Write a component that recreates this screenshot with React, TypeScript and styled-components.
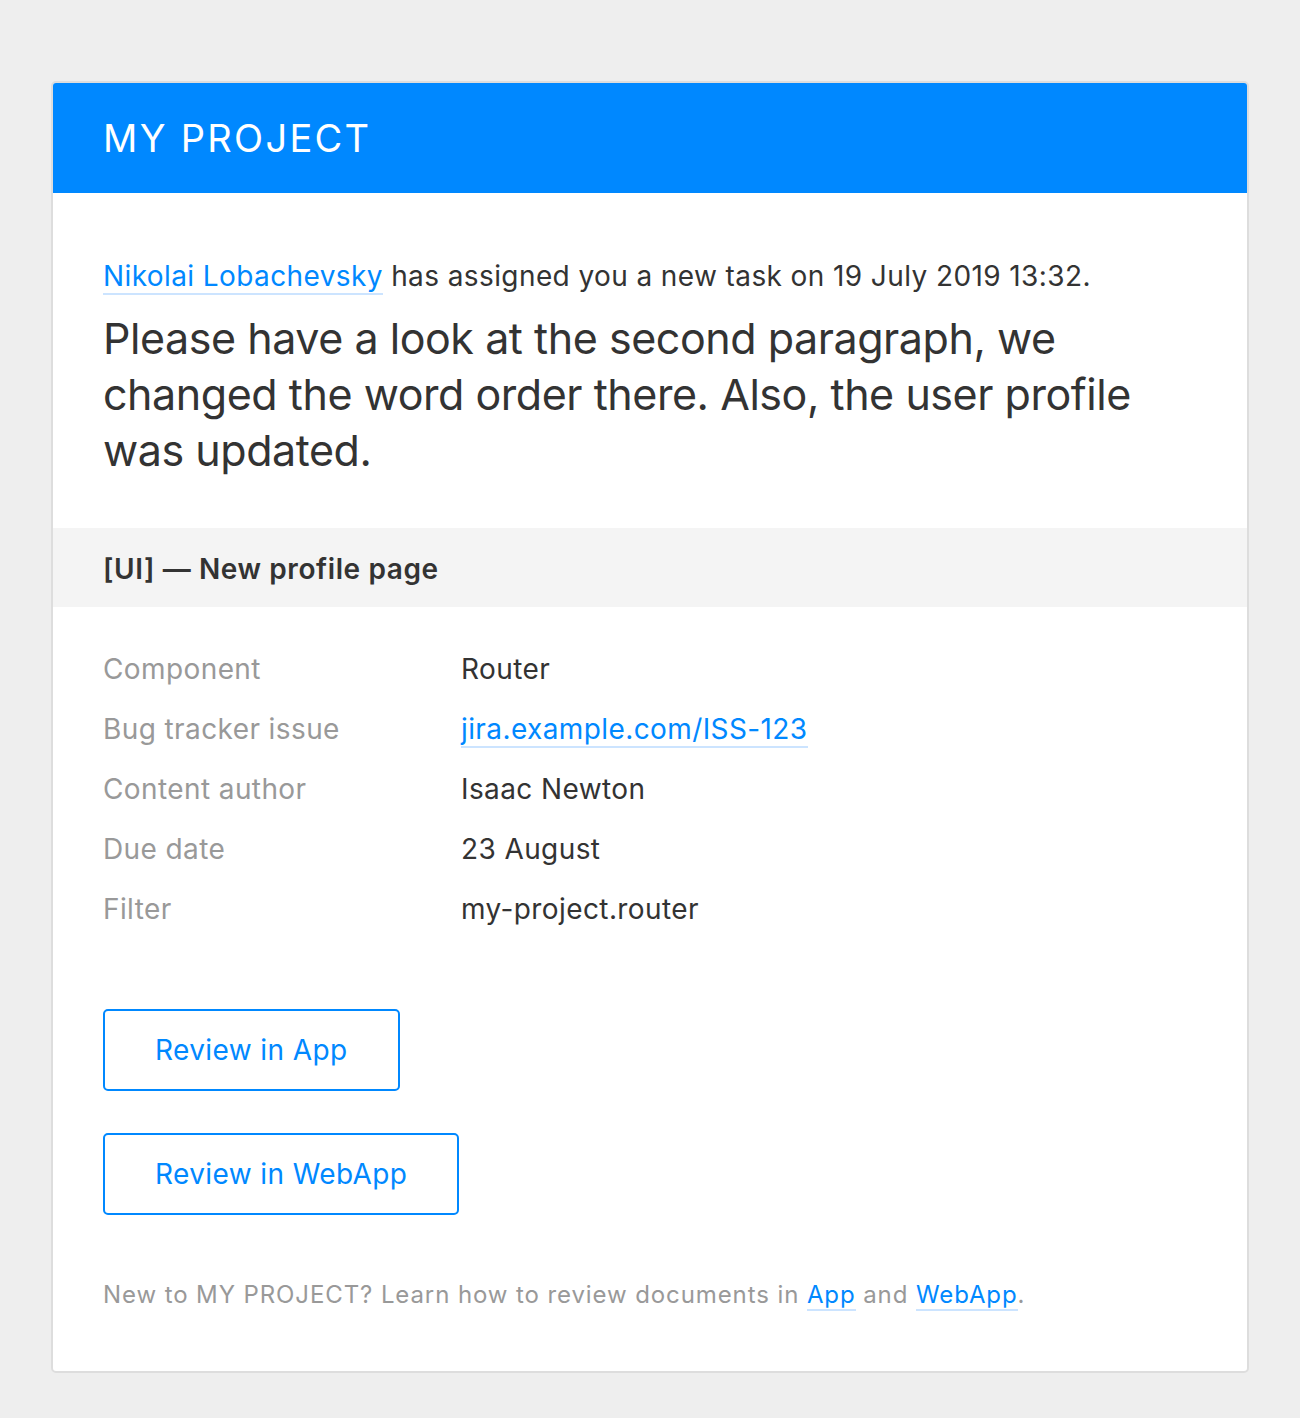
import React from "react";
import styled, { createGlobalStyle } from "styled-components";

const GlobalStyle = createGlobalStyle`
    body {
        margin: 0;
        background: #eeeeee;
        font-family: Inter, "Noto Sans", "Liberation Sans", sans-serif;
        color: #333333;
    }
`;

const Page = styled.div`
    padding: 81px 51px 45px;
`;

const Card = styled.div`
    width: 1198px;
    box-sizing: border-box;
    background: #ffffff;
    border: 2px solid #dddddd;
    border-radius: 5px;
    overflow: hidden;
`;

const Header = styled.div`
    background: #0088ff;
    height: 110px;
    display: flex;
    align-items: center;
    padding: 0 50px;
    color: #ffffff;
    font-size: 38px;
    letter-spacing: 2.3px;
`;

const Section = styled.div<{ $top?: number; $bottom?: number }>`
    padding: ${(p) => p.$top ?? 0}px 50px ${(p) => p.$bottom ?? 0}px;
`;

const Intro = styled.p`
    margin: 0 0 14px;
    font-size: 28px;
    line-height: 40px;
    letter-spacing: 0.4px;
`;

const Lead = styled.p`
    margin: 0;
    font-size: 43px;
    line-height: 56px;
    letter-spacing: -0.45px;
`;

const Link = styled.a`
    color: #0088ff;
    text-decoration: none;
    border-bottom: 2px solid #cce4ff;
`;

const Band = styled.div`
    background: #f4f4f4;
    padding: 22px 50px 18px;
    font-size: 28px;
    line-height: 39px;
    font-weight: 600;
    letter-spacing: 0.6px;
    color: #333333;
`;

const Details = styled.div`
    display: grid;
    grid-template-columns: 358px 1fr;
    font-size: 28px;
    line-height: 60px;
    letter-spacing: 0.4px;
`;

const Label = styled.div`
    color: #999999;
`;

const Value = styled.div`
    color: #333333;
`;

const Actions = styled.div`
    display: flex;
    flex-direction: column;
    align-items: flex-start;
    gap: 42px;
    margin-top: 70px;
`;

const Button = styled.a`
    display: inline-flex;
    align-items: center;
    justify-content: center;
    box-sizing: border-box;
    height: 82px;
    padding: 0 50px;
    border: 2px solid #0088ff;
    border-radius: 5px;
    color: #0088ff;
    font-size: 28px;
    letter-spacing: 0.4px;
    text-decoration: none;
`;

const Footer = styled.p`
    margin: 60px 0 0;
    font-size: 24px;
    line-height: 40px;
    letter-spacing: 0.9px;
    color: #999999;
`;

const details: [string, React.ReactNode][] = [
    ["Component", "Router"],
    ["Bug tracker issue", <Link href="#">jira.example.com/ISS-123</Link>],
    ["Content author", "Isaac Newton"],
    ["Due date", "23 August"],
    ["Filter", "my-project.router"],
];

const App = () => {
    return (
        <>
            <GlobalStyle />
            <Page>
                <Card>
                    <Header>MY PROJECT</Header>
                    <Section $top={63} $bottom={50}>
                        <Intro>
                            <Link href="#">Nikolai Lobachevsky</Link> has assigned you a new task on 19 July 2019 13:32.
                        </Intro>
                        <Lead>
                            Please have a look at the second paragraph, we changed the word order there. Also, the user profile was updated.
                        </Lead>
                    </Section>
                    <Band>[UI] — New profile page</Band>
                    <Section $top={32} $bottom={56}>
                        <Details>
                            {details.map(([label, value]) => (
                                <React.Fragment key={label}>
                                    <Label>{label}</Label>
                                    <Value>{value}</Value>
                                </React.Fragment>
                            ))}
                        </Details>
                        <Actions>
                            <Button href="#">Review in App</Button>
                            <Button href="#">Review in WebApp</Button>
                        </Actions>
                        <Footer>
                            New to MY PROJECT? Learn how to review documents in <Link href="#">App</Link> and <Link href="#">WebApp</Link>.
                        </Footer>
                    </Section>
                </Card>
            </Page>
        </>
    );
};

export default App;
